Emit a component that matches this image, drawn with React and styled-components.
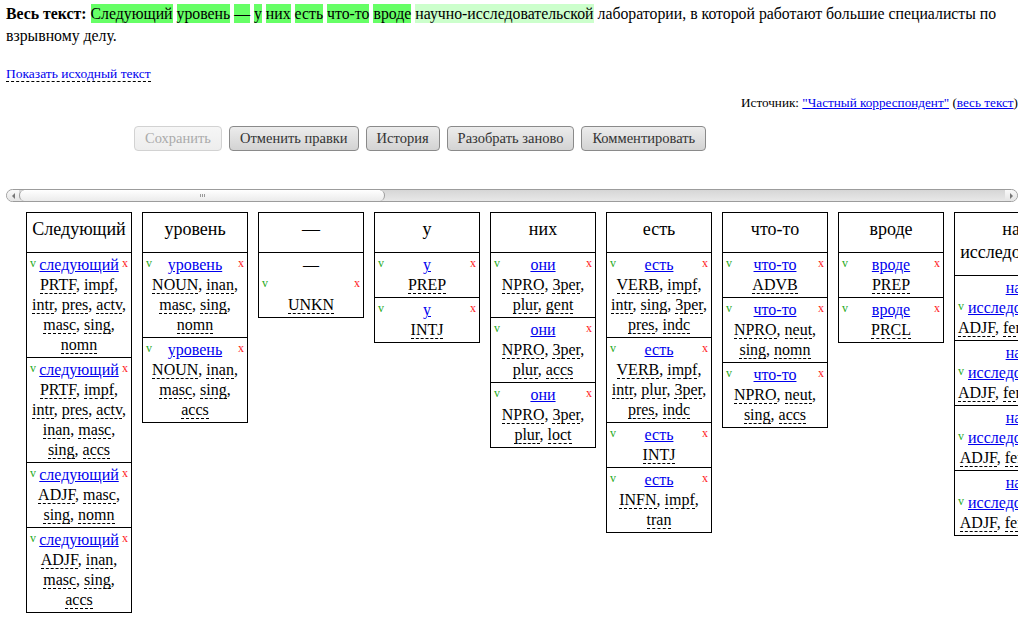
import React from 'react';
import styled, { createGlobalStyle } from 'styled-components';

const GlobalStyle = createGlobalStyle`
  body {
    margin: 0;
    background: #fff;
    color: #000;
    font-family: "Liberation Serif", "Times New Roman", serif;
  }
`;

const Page = styled.div`
  padding: 0 6px;
`;

const FullText = styled.div`
  padding-top: 3px;
  font-size: 15.8px;
  line-height: 22px;
`;

const Label = styled.b`
  font-weight: bold;
`;

const Word = styled.span`
  background: ${p => (p.$soft ? '#ccffcc' : '#66ff66')};
  padding: 1px 0;
`;

const ShowSourceRow = styled.div`
  display: flex;
  margin-top: 19px;
`;

const ShowSource = styled.a`
  font-size: 13.5px;
  line-height: 15px;
  color: #0000ee;
  text-decoration: none;
  border-bottom: 1px dashed #000;
  cursor: pointer;
`;

const SourceLine = styled.div`
  margin-top: 13px;
  font-size: 13.2px;
  line-height: 15px;
  text-align: right;
`;

const Link = styled.a`
  color: #0000ee;
  text-decoration: underline;
`;

const Toolbar = styled.div`
  display: flex;
  gap: 7px;
  margin-top: 16px;
  padding-left: 128px;
`;

const Button = styled.button`
  height: 25px;
  padding: 0 10px;
  font-family: "Liberation Serif", "Times New Roman", serif;
  font-size: 14.5px;
  line-height: 23px;
  color: #333;
  border: 1px solid #8a8a8a;
  border-radius: 4px;
  background: linear-gradient(#ececec, #d3d3d3);
  cursor: pointer;

  &:disabled {
    color: #aaa;
    border-color: #d2d2d2;
    background: linear-gradient(#f6f6f6, #ededed);
    cursor: default;
  }
`;

const ScrollBar = styled.div`
  display: flex;
  height: 13px;
  margin-top: 38px;
  box-sizing: border-box;
  border: 1px solid #9c9c9c;
  border-radius: 7px;
  background: linear-gradient(#d6d6d6, #e8e8e8);
  overflow: hidden;
`;

const Arrow = styled.div`
  width: 12px;
  display: flex;
  align-items: center;
  justify-content: center;
  background: linear-gradient(#fafafa, #e4e4e4);

  &::before {
    content: '';
    border-top: 3px solid transparent;
    border-bottom: 3px solid transparent;
    ${p => (p.$right ? 'border-left: 3px solid #777;' : 'border-right: 3px solid #777;')}
  }
`;

const Track = styled.div`
  flex: 1;
  display: flex;
`;

const Thumb = styled.div`
  width: 366px;
  box-sizing: border-box;
  border-left: 1px solid #9c9c9c;
  border-right: 1px solid #9c9c9c;
  border-radius: 6px;
  background: linear-gradient(#ffffff, #ebebeb);
  display: flex;
  align-items: center;
  justify-content: center;
  gap: 1px;
`;

const Grip = styled.span`
  width: 1px;
  height: 3px;
  background: #999;
`;

const Columns = styled.div`
  display: flex;
  align-items: flex-start;
  gap: 10px;
  margin-top: 10px;
  padding-left: 20px;
  overflow: hidden;
`;

const Column = styled.div`
  flex: 0 0 ${p => (p.$wide ? 156 : 106)}px;
  box-sizing: border-box;
  border: 1px solid #000;
`;

const Header = styled.div`
  padding: 5px 4px 11px;
  font-size: 18px;
  line-height: 23px;
  text-align: center;
  border-bottom: 1px solid #000;
`;

const Variant = styled.div`
  padding: 2px 3px;
  font-size: 16px;
  line-height: 20px;
  text-align: center;

  & + & {
    border-top: 1px solid #000;
  }
`;

const Accept = styled.span`
  float: left;
  font-size: 12px;
  line-height: 16px;
  color: #22aa22;
  cursor: pointer;
`;

const Reject = styled.span`
  float: right;
  font-size: 12px;
  line-height: 16px;
  color: #ff2020;
  cursor: pointer;
`;

const MarkRow = styled.div`
  display: flex;
  justify-content: space-between;
  height: 20px;
  font-size: 12px;
  line-height: 16px;
`;

const Line = styled.div`
  white-space: nowrap;
  text-align: ${p => (p.$left ? 'left' : 'center')};
`;

const Gram = styled.span`
  border-bottom: 1px dashed #000;
`;

const adj = c => ({ lemma: 'научно-исследовательской', split: true, lines: [['ADJF', 'femn', 'sing', c]] });

const columns = [
  {
    word: 'Следующий',
    variants: [
      { lemma: 'следующий', lines: [['PRTF', 'impf'], ['intr', 'pres', 'actv'], ['masc', 'sing'], ['nomn']] },
      { lemma: 'следующий', lines: [['PRTF', 'impf'], ['intr', 'pres', 'actv'], ['inan', 'masc'], ['sing', 'accs']] },
      { lemma: 'следующий', lines: [['ADJF', 'masc'], ['sing', 'nomn']] },
      { lemma: 'следующий', lines: [['ADJF', 'inan'], ['masc', 'sing'], ['accs']] },
    ],
  },
  {
    word: 'уровень',
    variants: [
      { lemma: 'уровень', lines: [['NOUN', 'inan'], ['masc', 'sing'], ['nomn']] },
      { lemma: 'уровень', lines: [['NOUN', 'inan'], ['masc', 'sing'], ['accs']] },
    ],
  },
  { word: '—', variants: [{ lemma: '—', plain: true, lines: [['UNKN']] }] },
  {
    word: 'у',
    variants: [
      { lemma: 'у', lines: [['PREP']] },
      { lemma: 'у', lines: [['INTJ']] },
    ],
  },
  {
    word: 'них',
    variants: [
      { lemma: 'они', lines: [['NPRO', '3per'], ['plur', 'gent']] },
      { lemma: 'они', lines: [['NPRO', '3per'], ['plur', 'accs']] },
      { lemma: 'они', lines: [['NPRO', '3per'], ['plur', 'loct']] },
    ],
  },
  {
    word: 'есть',
    variants: [
      { lemma: 'есть', lines: [['VERB', 'impf'], ['intr', 'sing', '3per'], ['pres', 'indc']] },
      { lemma: 'есть', lines: [['VERB', 'impf'], ['intr', 'plur', '3per'], ['pres', 'indc']] },
      { lemma: 'есть', lines: [['INTJ']] },
      { lemma: 'есть', lines: [['INFN', 'impf'], ['tran']] },
    ],
  },
  {
    word: 'что-то',
    variants: [
      { lemma: 'что-то', lines: [['ADVB']] },
      { lemma: 'что-то', lines: [['NPRO', 'neut'], ['sing', 'nomn']] },
      { lemma: 'что-то', lines: [['NPRO', 'neut'], ['sing', 'accs']] },
    ],
  },
  {
    word: 'вроде',
    variants: [
      { lemma: 'вроде', lines: [['PREP']] },
      { lemma: 'вроде', lines: [['PRCL']] },
    ],
  },
  {
    word: 'научно-исследовательской',
    wide: true,
    variants: [adj('gent'), adj('datv'), adj('ablt'), adj('loct')],
  },
];

const Grammemes = ({ lines }) =>
  lines.map((line, i) => (
    <Line key={i}>
      {line.map((g, j) => (
        <React.Fragment key={g + j}>
          {j > 0 && ' '}
          <Gram>{g}</Gram>
          {(j < line.length - 1 || i < lines.length - 1) && ','}
        </React.Fragment>
      ))}
    </Line>
  ));

const Parse = ({ v }) => {
  if (v.plain) {
    return (
      <Variant>
        <Line>{v.lemma}</Line>
        <MarkRow>
          <Accept>v</Accept>
          <Reject>x</Reject>
        </MarkRow>
        <Grammemes lines={v.lines} />
      </Variant>
    );
  }
  if (v.split) {
    const [head, tail] = v.lemma.split('-');
    return (
      <Variant>
        <Line><Link href="#">{head}-</Link></Line>
        <Line $left>
          <Accept>v</Accept>
          <Reject>x</Reject>
          &nbsp;<Link href="#">{tail}</Link>
        </Line>
        <Grammemes lines={v.lines} />
      </Variant>
    );
  }
  return (
    <Variant>
      <Accept>v</Accept>
      <Reject>x</Reject>
      <Line><Link href="#">{v.lemma}</Link></Line>
      <Grammemes lines={v.lines} />
    </Variant>
  );
};

const highlighted = ['Следующий', 'уровень', '—', 'у', 'них', 'есть', 'что-то', 'вроде'];

export default function App() {
  return (
    <Page>
      <GlobalStyle />
      <FullText>
        <Label>Весь текст:</Label>{' '}
        {highlighted.map(w => (
          <React.Fragment key={w}>
            <Word>{w}</Word>{' '}
          </React.Fragment>
        ))}
        <Word $soft>научно-исследовательской</Word> лаборатории, в которой работают большие специалисты по
        взрывному делу.
      </FullText>

      <ShowSourceRow>
        <ShowSource>Показать исходный текст</ShowSource>
      </ShowSourceRow>

      <SourceLine>
        Источник: <Link href="#">"Частный корреспондент"</Link> (<Link href="#">весь текст</Link>)
      </SourceLine>

      <Toolbar>
        <Button disabled>Сохранить</Button>
        <Button>Отменить правки</Button>
        <Button>История</Button>
        <Button>Разобрать заново</Button>
        <Button>Комментировать</Button>
      </Toolbar>

      <ScrollBar>
        <Arrow />
        <Track>
          <Thumb>
            <Grip />
            <Grip />
            <Grip />
          </Thumb>
        </Track>
        <Arrow $right />
      </ScrollBar>

      <Columns>
        {columns.map((c, i) => (
          <Column key={i} $wide={c.wide}>
            <Header>{c.word}</Header>
            {c.variants.map((v, j) => (
              <Parse key={j} v={v} />
            ))}
          </Column>
        ))}
      </Columns>
    </Page>
  );
}
